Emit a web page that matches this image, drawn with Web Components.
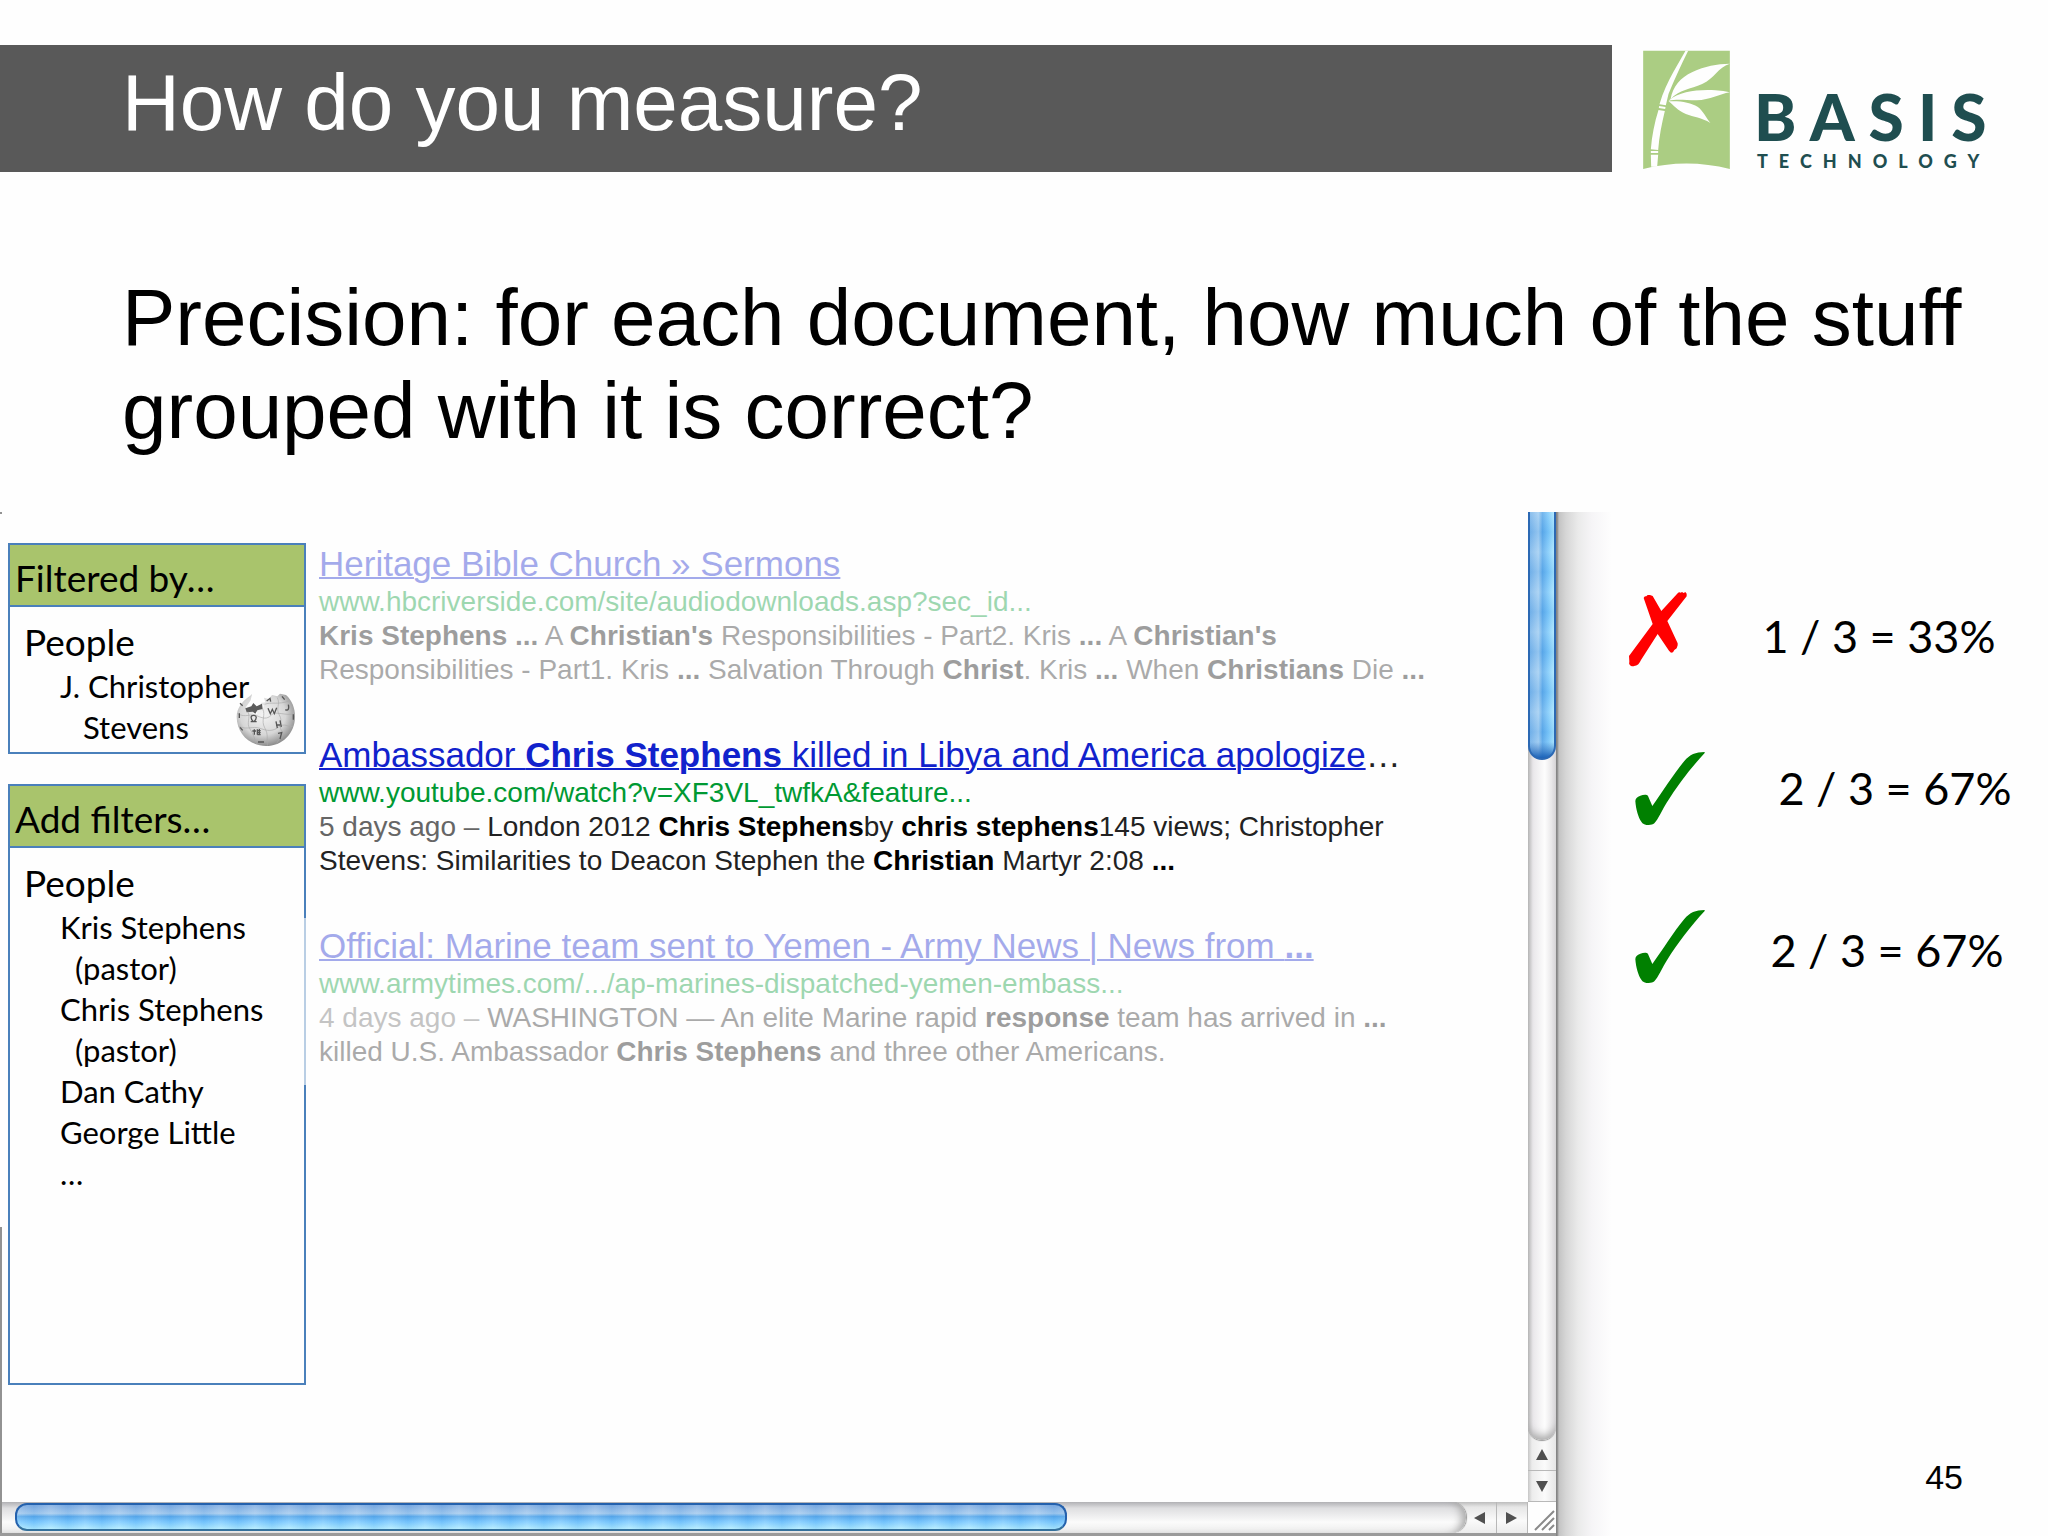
<!DOCTYPE html>
<html lang="en">
<head>
<meta charset="utf-8">
<title>How do you measure?</title>
<style>
    body {
        margin: 0;
        background: #fefefe;
        color: #000;
        font-family: "Liberation Sans", Arial, sans-serif;
    }
</style>
</head>
<body>

<slide-page>
    <slide-header slot="header">How do you measure?</slide-header>
    <slide-lead slot="lead">Precision: for each document, how much of the stuff grouped with it is correct?</slide-lead>

    <browser-window slot="window">
        <filter-panel slot="filters" heading="Filtered by…" group="People">
            <filter-item hang="wide">J. Christopher<span slot="note">Stevens</span></filter-item>
            <wiki-globe slot="badge"></wiki-globe>
        </filter-panel>
        <filter-panel slot="filters" class="grow" heading="Add filters…" group="People">
            <filter-item>Kris Stephens<span slot="note">(pastor)</span></filter-item>
            <filter-item>Chris Stephens<span slot="note">(pastor)</span></filter-item>
            <filter-item>Dan Cathy</filter-item>
            <filter-item>George Little</filter-item>
            <filter-item>…</filter-item>
        </filter-panel>

        <search-result slot="results" faded>
            <span slot="title">Heritage Bible Church » Sermons</span>
            <span slot="url">www.hbcriverside.com/site/audiodownloads.asp?sec_id...</span>
            <b>Kris Stephens ...</b> A <b>Christian's</b> Responsibilities - Part2. Kris <b>...</b> A <b>Christian's</b><br>
            Responsibilities - Part1. Kris <b>...</b> Salvation Through <b>Christ</b>. Kris <b>...</b> When <b>Christians</b> Die <b>...</b>
        </search-result>
        <search-result slot="results">
            <span slot="title">Ambassador <b>Chris Stephens</b> killed in Libya and America apologize</span>
            <span slot="more">…</span>
            <span slot="url">www.youtube.com/watch?v=XF3VL_twfkA&amp;feature...</span>
            <span slot="date">5 days ago – </span>London 2012 <b>Chris Stephens</b>by <b>chris stephens</b>145 views; Christopher<br>
            Stevens: Similarities to Deacon Stephen the <b>Christian</b> Martyr 2:08 <b>...</b>
        </search-result>
        <search-result slot="results" faded="wide">
            <span slot="title">Official: Marine team sent to Yemen - Army News | News from <b>...</b></span>
            <span slot="url">www.armytimes.com/.../ap-marines-dispatched-yemen-embass...</span>
            <span slot="date">4 days ago – </span>WASHINGTON — An elite Marine rapid <b>response</b> team has arrived in <b>...</b><br>
            killed U.S. Ambassador <b>Chris Stephens</b> and three other Americans.
        </search-result>
    </browser-window>

    <score-board slot="scores">
        <score-mark slot="marks" kind="cross"></score-mark>
        <score-mark slot="marks" kind="check"></score-mark>
        <score-mark slot="marks" kind="check"></score-mark>
        <span slot="values">1 / 3 = 33%</span>
        <span slot="values" class="far">2 / 3 = 67%</span>
        <span slot="values" class="mid">2 / 3 = 67%</span>
        <span slot="page">45</span>
    </score-board>
</slide-page>

<script>
class BaseElement extends HTMLElement {

    constructor() {
        super();
        this.shadow = this.attachShadow({ mode: 'open' });
    }

    connectedCallback() {
        this.render();
    }
}

class SlidePage extends BaseElement {

    render() {
        this.shadow.innerHTML =
        `
        <style>
            :host {
                display: flex;
                flex-direction: column;
                min-height: 100vh;
                box-sizing: border-box;
                padding-top: 45px;
                overflow: hidden;
            }
            main {
                flex: 1;
                display: grid;
                grid-template-columns: 76fr 24fr;
                margin-top: 55px;
            }
        </style>
        <slot name="header"></slot>
        <slot name="lead"></slot>
        <main>
            <slot name="window"></slot>
            <slot name="scores"></slot>
        </main>`;
    }
}

class SlideHeader extends BaseElement {

    render() {
        this.shadow.innerHTML =
        `
        <style>
            :host {
                display: flex;
                align-items: flex-start;
            }
            h1 {
                flex: 1;
                margin: 0;
                padding: 12px 0 23px 122px;
                background: #595959;
                color: #fff;
                font-size: 80px;
                font-weight: normal;
                line-height: 92px;
            }
        </style>
        <h1><slot></slot></h1>
        <brand-logo></brand-logo>`;
    }
}

class BrandLogo extends BaseElement {

    render() {
        this.shadow.innerHTML =
        `
        <style>
            :host {
                display: flex;
                height: 127px;
                width: 436px;
                color: #1f4e50;
                font-family: Lato, sans-serif;
                font-weight: 900;
            }
            svg {
                width: 87px;
                height: 120px;
                margin: 5px 24px 0 31px;
            }
            .name {
                font-size: 64px;
                line-height: 64px;
                letter-spacing: 14px;
                margin-top: 40px;
            }
            .sub {
                font-size: 18px;
                line-height: 24px;
                letter-spacing: 11px;
                padding-left: 3px;
            }
        </style>
        <svg viewBox="128 60 260 360" aria-hidden="true">
            <path fill="#abcd83" d="M128 62H388V417Q258 384 128 417Z"/>
            <g fill="#fefefe">
                <path d="M255 62H263C240 108 221 150 204 192L196 226L177 223C187 186 203 155 219 125Z"/>
                <path d="M176 228L195 231L194 237L175 234ZM174 240L193 243C184 280 176 320 173 360L151 358C154 318 162 278 174 240Z"/>
                <path d="M151 363H173V369H151ZM151 374H173L170 410H152Z"/>
                <path d="M210 208C218 168 238 144 276 126C313 108 349 102 388 101C352 112 342 145 305 162C270 178 236 178 210 208Z"/>
                <path d="M204 212C238 184 292 178 345 181Q370 182 388 187C356 192 330 210 288 211C255 211 232 206 204 212Z"/>
                <path d="M204 214C240 212 272 218 291 230C308 242 316 262 330 279C302 262 280 262 256 252C230 242 221 226 204 214Z"/>
            </g>
        </svg>
        <div>
            <div class="name">BASIS</div>
            <div class="sub">TECHNOLOGY</div>
        </div>`;
    }
}

class SlideLead extends BaseElement {

    render() {
        this.shadow.innerHTML =
        `
        <style>
            :host {
                display: block;
                padding: 99px 0 0 122px;
                font-size: 80px;
                line-height: 93px;
            }
            p {
                margin: 0;
            }
        </style>
        <p><slot></slot></p>`;
    }
}

class BrowserWindow extends BaseElement {

    render() {
        this.shadow.innerHTML =
        `
        <style>
            :host {
                position: relative;
                display: grid;
                grid-template-columns: 1fr 28px;
                grid-template-rows: 1fr 31px;
                border-bottom: 3px solid #9a9a9a;
            }
            /* shadow cast to the right of the window */
            :host::after {
                content: "";
                position: absolute;
                top: 0;
                bottom: -3px;
                left: 100%;
                width: 56px;
                background: linear-gradient(90deg, #858585 0, #858585 1px, #c4c4c4 3px, #d6d6d6 10px, #eaeaea 22px, #f6f5f7 36px, #fefefe 56px);
            }
            /* left frame, only its ends stay visible beside the panels */
            :host::before {
                content: "";
                position: absolute;
                left: 0;
                top: 0;
                bottom: 0;
                width: 2px;
                background: linear-gradient(#929292 2px, transparent 2px, transparent 70%, #929292 70%);
            }
            .view {
                display: grid;
                grid-template-columns: 298px 1fr;
                column-gap: 13px;
                padding: 31px 0 117px 8px;
            }
            .filters {
                display: flex;
                flex-direction: column;
                gap: 30px;
            }
            .results {
                display: flex;
                flex-direction: column;
                gap: 48px;
                padding-top: 1px;
            }
            ::slotted(.grow) {
                flex: 1;
            }
        </style>
        <div class="view">
            <div class="filters"><slot name="filters"></slot></div>
            <div class="results"><slot name="results"></slot></div>
        </div>
        <scroll-bar direction="vertical"></scroll-bar>
        <scroll-bar direction="horizontal"></scroll-bar>
        <resize-corner></resize-corner>`;
    }
}

class FilterPanel extends BaseElement {

    render() {
        this.shadow.innerHTML =
        `
        <style>
            :host {
                position: relative;
                display: block;
                border: 2px solid #4a80bb;
                font-family: Lato, sans-serif;
                line-height: 42px;
            }
            h2, h3 {
                margin: 0;
                font-size: 37px;
                font-weight: normal;
            }
            h2 {
                padding: 12px 5px 6px;
                background: #a9c46c;
                border-bottom: 2px solid #4a80bb;
            }
            h3 {
                padding: 14px 0 3px 14px;
            }
            .items {
                padding: 0 0 4px 50px;
                font-size: 31px;
                line-height: 41px;
            }
            ::slotted([slot="badge"]) {
                position: absolute;
                right: 8px;
                bottom: 5px;
            }
        </style>
        <h2>${this.getAttribute('heading')}</h2>
        <h3>${this.getAttribute('group')}</h3>
        <div class="items" role="list"><slot></slot></div>
        <slot name="badge"></slot>`;
    }
}

class FilterItem extends BaseElement {

    render() {
        this.setAttribute('role', 'listitem');
        this.shadow.innerHTML =
        `
        <style>
            :host {
                display: block;
                white-space: nowrap;
            }
            ::slotted([slot="note"]) {
                display: block;
                padding-left: 15px;
            }
            :host([hang="wide"]) ::slotted([slot="note"]) {
                padding-left: 23px;
            }
        </style>
        <slot></slot><slot name="note"></slot>`;
    }
}

class WikiGlobe extends BaseElement {

    render() {
        this.shadow.innerHTML =
        `
        <style>
            :host {
                display: block;
                width: 60px;
                height: 54px;
            }
            svg {
                display: block;
                width: 100%;
                height: 100%;
            }
        </style>
        <svg viewBox="0 0 180 162" aria-hidden="true">
            <defs>
                <radialGradient id="ball" cx="45%" cy="40%" r="60%">
                    <stop offset="0" stop-color="#f4f4f4"/>
                    <stop offset=".65" stop-color="#d6d6d6"/>
                    <stop offset="1" stop-color="#8e8e8e"/>
                </radialGradient>
            </defs>
            <path fill="url(#ball)" d="M42 9L48 3L44 22L30 42L32 55L50 54L52 64L64 62L62 50L80 48L84 38L74 30L88 28L84 14L98 18L108 6L124 10L132 2L150 6C168 22 177 45 177 71C177 122 138 159 90 159C42 159 2 122 2 71C2 47 18 24 42 9Z"/>
            <path fill="#5c5c5c" d="M28 46L46 40L52 30L62 40L78 32L80 48L64 52L58 62L50 56L32 58Z"/>
            <g fill="none" stroke="#aaa" stroke-width="2">
                <path d="M4 62C30 76 44 60 62 68S94 80 106 66S150 70 176 62"/>
                <path d="M8 100C34 112 50 98 72 106S110 116 128 102S156 104 170 100"/>
                <path d="M36 56C44 78 30 90 42 108S54 136 62 152"/>
                <path d="M80 48C90 66 74 82 86 104S92 136 94 158"/>
                <path d="M124 14C134 34 118 46 130 66S126 98 136 112S126 140 122 152"/>
                <path d="M86 34C104 26 126 36 160 24"/>
            </g>
            <g fill="none" stroke="#555" stroke-width="4">
                <path d="M12 31L20 38M10 61V75M12 103L20 112M92 24L102 16L104 26M138 10L146 20M157 35C160 48 156 55 148 50M172 64V80M66 147H84"/>
                <path d="M44 86H52C42 75 44 67 53 67S64 75 54 86H62"/>
                <path d="M96 46L103 62L109 49L115 62L122 44"/>
                <path d="M120 85L124 105M120 96H132M132 82L136 102"/>
                <path d="M55 109V125M49 114H60M64 109V125M64 113H74M64 119H74M64 125H74M70 108V125"/>
                <path d="M126 121L137 119L132 138"/>
            </g>
        </svg>`;
    }
}

class SearchResult extends BaseElement {

    render() {
        this.shadow.innerHTML =
        `
        <style>
            :host {
                position: relative;
                display: block;
                color: #222;
                font-size: 28px;
                line-height: 34px;
                white-space: nowrap;
            }
            h3 {
                margin: 0;
                color: #222;
                font-size: 35px;
                font-weight: normal;
                line-height: 40px;
            }
            a {
                color: #1122cc;
                text-decoration: underline;
                text-decoration-thickness: 2px;
            }
            cite {
                display: block;
                color: #009933;
                font-style: normal;
                line-height: 35px;
            }
            p {
                margin: 0;
            }
            ::slotted(b) {
                color: #000;
            }
            ::slotted([slot="date"]) {
                color: #666;
            }
            /* white veil over the results that are not in focus */
            :host([faded])::after {
                content: "";
                position: absolute;
                inset: -8px 0 -16px 0;
                background: #fefefe;
                opacity: 0.62;
                pointer-events: none;
            }
            :host([faded="wide"])::after {
                left: -16px;
            }
        </style>
        <h3><a href="#"><slot name="title"></slot></a><slot name="more"></slot></h3>
        <cite><slot name="url"></slot></cite>
        <p><slot name="date"></slot><slot></slot></p>`;
    }
}

class ScrollBar extends BaseElement {

    render() {
        const vertical = this.getAttribute('direction') === 'vertical';
        const arrows = vertical
            ? ['M14 9L20 20H8Z', 'M8 10H20L14 21Z']
            : ['M8 15L19 9V21Z', 'M20 15L9 9V21Z'];
        if (!vertical) {
            arrows[1] = 'M20 15L9 9V21Z';
        }
        const labels = vertical ? ['Scroll up', 'Scroll down'] : ['Scroll left', 'Scroll right'];

        this.shadow.innerHTML =
        `
        <style>
            :host {
                display: flex;
                flex-direction: column;
                box-sizing: border-box;
                background: linear-gradient(90deg, #c6c6c6, #ececec 4px, #fbfbfb 60%, #e6e6e6);
                overflow: hidden;
            }
            :host([direction="horizontal"]) {
                flex-direction: row;
                padding-left: 2px;
                background: linear-gradient(#bdbdbd, #e6e6e6 5px, #fafafa 60%, #ececec);
            }
            .track {
                flex: 1;
                border-radius: 0 0 14px 14px;
                background: linear-gradient(90deg, #b9b9b9, #e9e7ea 5px, #fdfdfd 60%, #dcdadd);
                box-shadow: inset 0 -8px 8px -4px #a8a8a8, 0 1px 1px #999;
            }
            .thumb {
                height: 26.7%;
                box-sizing: border-box;
                border: 2px solid #2c69b4;
                border-top: 0;
                border-radius: 0 0 14px 14px;
                background:
                    linear-gradient(transparent calc(100% - 16px), #1c63b8),
                    repeating-linear-gradient(rgba(255, 255, 255, 0.14) 0, rgba(40, 130, 220, 0.12) 20px, rgba(255, 255, 255, 0.14) 40px),
                    linear-gradient(90deg, #79b5ea, #a2cef2 35%, #5fabea 52%, #7cc8fa 75%, #a8e6ff);
            }
            :host([direction="horizontal"]) .track {
                padding-left: 13px;
                border-radius: 0 15px 15px 0;
                background: linear-gradient(#b4b4b8, #dedee0 6px, #fbfbfb 65%, #ececec);
                box-shadow: inset -8px 0 8px -4px #a8a8a8, 1px 0 1px #999;
            }
            :host([direction="horizontal"]) .thumb {
                width: 72.5%;
                height: 28px;
                margin-top: 1px;
                border: 2px solid #2461ad;
                border-bottom-color: #34719c;
                border-radius: 12px;
                background:
                    repeating-linear-gradient(90deg, rgba(255, 255, 255, 0.14) 0, rgba(40, 130, 220, 0.12) 17px, rgba(255, 255, 255, 0.14) 34px),
                    linear-gradient(#7fabe0, #a5cbee 35%, #5aa9ea 48%, #7ccaff 70%, #b0ecff);
            }
            button {
                display: block;
                width: 28px;
                height: 31px;
                padding: 0;
                border: 0;
                border-bottom: 1px solid #b8b8b8;
                background: transparent;
            }
            :host([direction="horizontal"]) button {
                width: 31px;
                border: 0;
                border-right: 1px solid #b8b8b8;
            }
            svg {
                display: block;
                width: 28px;
                height: 30px;
                fill: #505050;
            }
        </style>
        <div class="track"><div class="thumb"></div></div>
        ${arrows.map((d, i) => `
        <button type="button" aria-label="${labels[i]}">
            <svg viewBox="0 0 28 30"><path d="${d}"/></svg>
        </button>`).join('')}`;
    }
}

class ResizeCorner extends BaseElement {

    render() {
        this.shadow.innerHTML =
        `
        <style>
            :host {
                display: block;
                background: #fefefe;
            }
            svg {
                display: block;
                width: 28px;
                height: 31px;
            }
        </style>
        <svg viewBox="0 0 28 31" fill="none" stroke="#8a8a8a" stroke-width="2" aria-hidden="true">
            <path d="M7 28L26 9M14 28L26 16M21 28L26 23"/>
        </svg>`;
    }
}

class ScoreBoard extends BaseElement {

    render() {
        this.shadow.innerHTML =
        `
        <style>
            :host {
                position: relative;
                z-index: 1;
                display: grid;
                grid-template-columns: 80px 1fr;
                grid-template-rows: 1fr auto;
                column-gap: 55px;
                padding-left: 71px;
            }
            .marks {
                display: flex;
                flex-direction: column;
                gap: 78px;
                padding-top: 78px;
            }
            .values {
                display: grid;
                grid-template-rows: 152px 162px;
                align-content: start;
                padding-top: 96px;
                font-family: Lato, sans-serif;
                font-size: 45px;
                line-height: 56px;
                white-space: nowrap;
            }
            ::slotted(.far) {
                padding-left: 16px;
            }
            ::slotted(.mid) {
                padding-left: 8px;
            }
            footer {
                grid-column: 1 / -1;
                padding: 0 85px 39px 0;
                font-size: 34px;
                line-height: 40px;
                text-align: right;
            }
        </style>
        <div class="marks"><slot name="marks"></slot></div>
        <div class="values"><slot name="values"></slot></div>
        <footer><slot name="page"></slot></footer>`;
    }
}

class ScoreMark extends BaseElement {

    render() {
        const cross = this.getAttribute('kind') === 'cross';
        const shape = cross
            ? '<path fill="#f00" d="M50 24Q52 17 58 19L62 15L69 15L77 18L103 63L152 10Q156 5 161 8L165 6L170 9L175 6L179 11L179 19L121 93L152 160L152 166L149 175L142 180L138 187L132 188L126 182L92 132L42 210Q34 228 24 227Q12 231 9 225Q5 223 7 214L6 198L77 102Z"/>'
            : '<path fill="#008000" d="M233 12C206 12 188 20 172 39C140 77 108 130 76 174L63 144C58 138 48 141 40 143C30 146 25 152 25 160C27 185 34 209 43 221C48 233 74 234 82 226C94 213 104 188 119 164C154 108 190 62 233 15Z"/>';

        this.shadow.innerHTML =
        `
        <style>
            :host {
                display: block;
            }
            svg {
                display: block;
                width: 80px;
                height: 80px;
            }
        </style>
        <svg viewBox="0 0 240 240" role="img" aria-label="${cross ? 'wrong' : 'correct'}">${shape}</svg>`;
    }
}

customElements.define('slide-page', SlidePage);
customElements.define('slide-header', SlideHeader);
customElements.define('brand-logo', BrandLogo);
customElements.define('slide-lead', SlideLead);
customElements.define('browser-window', BrowserWindow);
customElements.define('filter-panel', FilterPanel);
customElements.define('filter-item', FilterItem);
customElements.define('wiki-globe', WikiGlobe);
customElements.define('search-result', SearchResult);
customElements.define('scroll-bar', ScrollBar);
customElements.define('resize-corner', ResizeCorner);
customElements.define('score-board', ScoreBoard);
customElements.define('score-mark', ScoreMark);
</script>
</body>
</html>
